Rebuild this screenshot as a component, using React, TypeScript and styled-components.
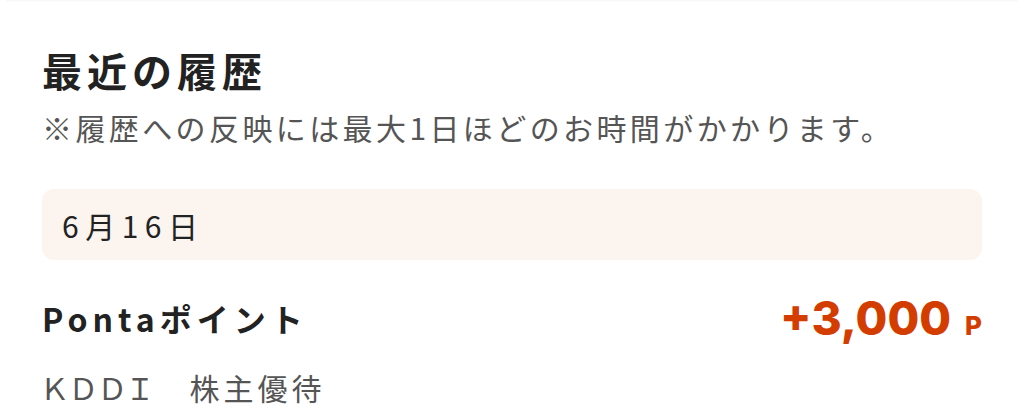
import React from 'react';
import styled, { createGlobalStyle } from 'styled-components';

const GlobalStyle = createGlobalStyle`
  body {
    margin: 0;
    background: #fff;
    font-family: "Noto Sans CJK JP", "Noto Sans", sans-serif;
    color: #222;
  }
`;

const HISTORY = [
  {
    date: '6月16日',
    items: [{ title: 'Pontaポイント', amount: '+3,000', unit: 'P', note: 'ＫＤＤＩ　株主優待' }],
  },
];

function App() {
  return (
    <>
      <GlobalStyle />
      <TopEdge />
      <Wrapper>
        <Heading>最近の履歴</Heading>
        <Notice>※履歴への反映には最大1日ほどのお時間がかかります。</Notice>
        {HISTORY.map((group) => (
          <section key={group.date}>
            <DateBar>{group.date}</DateBar>
            {group.items.map((item) => (
              <Item key={item.title}>
                <ItemRow>
                  <ItemTitle>{item.title}</ItemTitle>
                  <Amount>
                    {item.amount}
                    <Unit>{item.unit}</Unit>
                  </Amount>
                </ItemRow>
                <ItemNote>{item.note}</ItemNote>
              </Item>
            ))}
          </section>
        ))}
      </Wrapper>
    </>
  );
}

const TopEdge = styled.div`
  height: 2px;
  margin: 0 6px;
  background: linear-gradient(to bottom, rgba(0, 0, 0, 0.04), rgba(0, 0, 0, 0));
`;

const Wrapper = styled.main`
  padding: 40px 42px 0;
`;

const Heading = styled.h2`
  margin: 0;
  font-size: 40px;
  line-height: 56px;
  font-weight: 700;
  letter-spacing: 5px;
  color: #222;
`;

const Notice = styled.p`
  margin: 0;
  font-size: 30px;
  line-height: 58px;
  letter-spacing: 3.4px;
  color: #555;
`;

const DateBar = styled.div`
  margin-top: 33px;
  height: 71px;
  padding: 0 20px;
  display: flex;
  align-items: center;
  border-radius: 12px;
  background: #fcf5ef;
  font-size: 30px;
  letter-spacing: 6.5px;
  color: #222;
`;

const Item = styled.div`
  padding-top: 28px;
`;

const ItemRow = styled.div`
  display: flex;
  align-items: center;
  justify-content: space-between;
  height: 60px;
`;

const ItemTitle = styled.div`
  font-size: 32px;
  font-weight: 700;
  letter-spacing: 5px;
  color: #222;
`;

const Amount = styled.div`
  font-family: Inter, "Noto Sans", sans-serif;
  font-size: 46px;
  font-weight: 800;
  color: #d43d00;
  display: flex;
  align-items: baseline;
`;

const Unit = styled.span`
  margin-left: 14px;
  font-size: 26px;
  font-weight: 800;
`;

const ItemNote = styled.div`
  margin-top: 15px;
  font-size: 30px;
  line-height: 48px;
  letter-spacing: 4px;
  font-feature-settings: "palt";
  color: #555;
`;

export default App;
